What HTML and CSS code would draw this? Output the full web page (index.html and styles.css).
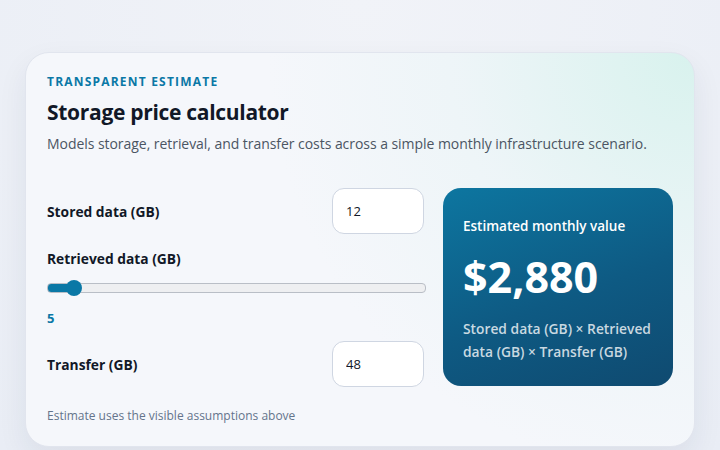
FILE: index.html
```html
<!DOCTYPE html>
<html lang="en">

<head>
    <meta charset="UTF-8">
    <meta name="viewport" content="width=device-width, initial-scale=1.0">
    <title>Storage price calculator</title>
    <link rel="stylesheet" href="styles.css">
</head>

<body>
    <main class="card">
        <p class="eyebrow">Transparent estimate</p>
        <h1>Storage price calculator</h1>
        <p class="lead">Models storage, retrieval, and transfer costs across a simple monthly infrastructure scenario.</p>

        <div class="layout">
            <!-- Inputs -->
            <div class="fields">
                <div class="field-row">
                    <label for="stored">Stored data (GB)</label>
                    <input type="number" id="stored" value="12">
                </div>

                <div class="field-stack">
                    <label for="retrieved">Retrieved data (GB)</label>
                    <input type="range" id="retrieved" min="0" max="100" value="5">
                    <span class="range-value" id="retrieved-value">5</span>
                </div>

                <div class="field-row">
                    <label for="transfer">Transfer (GB)</label>
                    <input type="number" id="transfer" value="48">
                </div>

                <p class="note">Estimate uses the visible assumptions above</p>
            </div>

            <!-- Result -->
            <div class="result">
                <p class="result-label">Estimated monthly value</p>
                <p class="result-value" id="total">$2,880</p>
                <p class="result-formula">Stored data (GB) × Retrieved data (GB) × Transfer (GB)</p>
            </div>
        </div>
    </main>

    <script>
        // Recalculate the estimate whenever an input changes
        function updateTotal() {
            const stored = parseFloat(document.getElementById('stored').value) || 0;
            const retrieved = parseFloat(document.getElementById('retrieved').value) || 0;
            const transfer = parseFloat(document.getElementById('transfer').value) || 0;

            document.getElementById('retrieved-value').textContent = retrieved;
            const total = stored * retrieved * transfer;
            document.getElementById('total').textContent = '$' + total.toLocaleString('en-US');
        }

        document.querySelectorAll('input').forEach(input => input.addEventListener('input', updateTotal));
        updateTotal();
    </script>
</body>
</html>
```

FILE: styles.css
```css
body {
    margin: 0;
    padding: 52px 25px 0;
    font-family: "Segoe UI", "Open Sans", sans-serif;
    color: #111827;
    background: radial-gradient(circle at 50% 0%, #f1f3f8 0%, #e9edf5 100%);
    min-height: 100vh;
    box-sizing: border-box;
}

.card {
    padding: 20px 21px 22px;
    border-radius: 24px;
    border: 1px solid #e1e5ee;
    background:
        radial-gradient(circle at 100% 0%, rgba(204, 240, 232, 0.7) 0%, rgba(220, 240, 240, 0.3) 30%, rgba(245, 247, 251, 0) 55%),
        #f5f7fb;
    box-shadow: 0 12px 30px rgba(30, 41, 72, 0.07);
}

.eyebrow {
    margin: 0;
    font-size: 12px;
    font-weight: 700;
    letter-spacing: 1.2px;
    text-transform: uppercase;
    color: #0a78a6;
}

h1 {
    margin: 8px 0 0;
    font-size: 21px;
    font-weight: 700;
    letter-spacing: -0.3px;
    color: #111827;
}

.lead {
    margin: 8px 0 0;
    font-size: 14px;
    letter-spacing: -0.05px;
    color: #4b5563;
}

.layout {
    display: grid;
    grid-template-columns: 1fr 230px;
    gap: 19px;
    margin-top: 35px;
}

.fields {
    display: flex;
    flex-direction: column;
}

.field-row {
    display: flex;
    align-items: center;
    justify-content: space-between;
}

label {
    font-size: 13.8px;
    font-weight: 700;
    color: #111827;
}

input[type="number"] {
    width: 92px;
    height: 46px;
    box-sizing: border-box;
    padding: 0 13px;
    border: 1px solid #cfd6e2;
    border-radius: 12px;
    background: #fff;
    font-family: inherit;
    font-size: 13px;
    color: #111827;
    -moz-appearance: textfield;
}

input[type="number"]::-webkit-inner-spin-button,
input[type="number"]::-webkit-outer-spin-button {
    -webkit-appearance: none;
    margin: 0;
}

.field-stack {
    display: flex;
    flex-direction: column;
    margin-top: 15px;
}

input[type="range"] {
    -webkit-appearance: none;
    appearance: none;
    width: 100%;
    height: 8px;
    margin: 15px 0 0;
    border-radius: 4px;
    border: 1px solid #b9bec6;
    background: linear-gradient(#0a78a6, #0a78a6) 0 0 / 7% 100% no-repeat, #eeeff1;
}

input[type="range"]::-webkit-slider-thumb {
    -webkit-appearance: none;
    width: 16px;
    height: 16px;
    border-radius: 50%;
    background: #0a78a6;
    border: none;
}

.range-value {
    margin-top: 16px;
    font-size: 13px;
    font-weight: 700;
    color: #0a78a6;
}

.field-stack + .field-row {
    margin-top: 14px;
}

.note {
    margin: 20px 0 0;
    font-size: 12px;
    color: #64748b;
}

.result {
    align-self: start;
    height: 198px;
    box-sizing: border-box;
    padding: 29px 20px;
    border-radius: 18px;
    color: #fff;
    background: linear-gradient(160deg, #0d76a0 0%, #0e5a83 55%, #0f4a70 100%);
}

.result-label {
    margin: 0;
    font-size: 13.5px;
    font-weight: 600;
}

.result-value {
    margin: 16px 0 0;
    font-size: 43px;
    font-weight: 700;
    line-height: 1.2;
}

.result-formula {
    margin: 14px 0 0;
    font-size: 13.8px;
    font-weight: 600;
    line-height: 23px;
    color: rgba(255, 255, 255, 0.78);
}
```
